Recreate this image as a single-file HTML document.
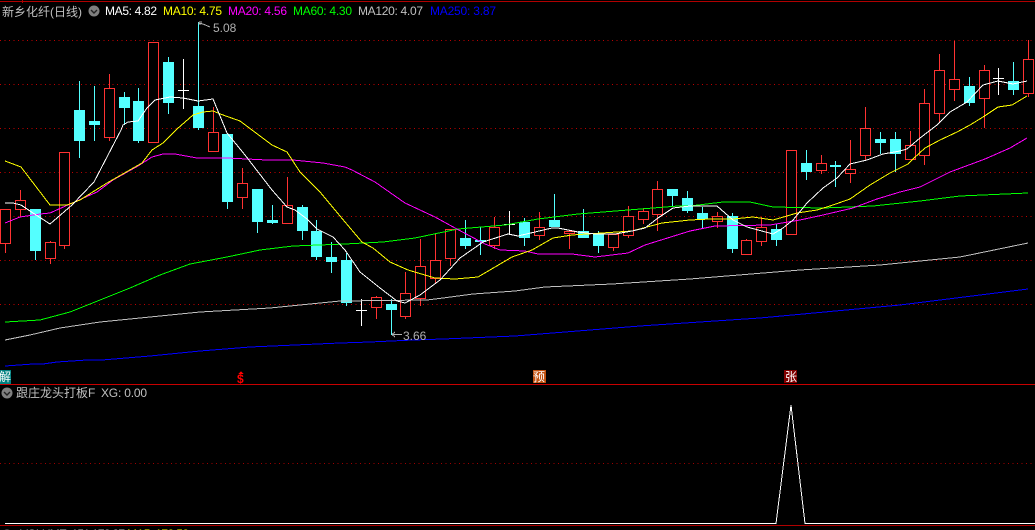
<!DOCTYPE html>
<html><head><meta charset="utf-8"><title>新乡化纤</title>
<style>
html,body{margin:0;padding:0;background:#000;width:1035px;height:530px;overflow:hidden}
svg{display:block;position:absolute;left:0;top:0}
text{font-family:"Liberation Sans","WenQuanYi Zen Hei","Noto Sans CJK SC",sans-serif;font-size:12px}
</style></head><body>
<svg width="1035" height="530" viewBox="0 0 1035 530" xmlns="http://www.w3.org/2000/svg">
<rect width="1035" height="530" fill="#000"/>
<g shape-rendering="crispEdges" fill="none">
<path d="M0 1.5H1035M22.5 0V3" stroke="#b00000"/>
<path d="M0 40.5H1035M0 84.5H1035M0 128.5H1035M0 172.5H1035M0 216.5H1035M0 260.5H1035M0 304.5H1035" stroke="#c00000" stroke-dasharray="1 3.5"/>
<path d="M0 463.5H1035" stroke="#a00000" stroke-dasharray="1 3.5"/>
<path d="M0 384.5H1035" stroke="#c80000"/>
<path d="M0 525.5H1035" stroke="#b00000"/>

<!-- red wicks -->
<path stroke="#ff3232" d="M5.5 243V253M20.5 190V217M50.5 241V264M64.5 245V249M109.5 74V141M213.5 107V151M242.5 168V209M287.5 177V223M376.5 296V319M405.5 272V319M420.5 239V306M435.5 234V284M450.5 229V266M494.5 217V249M539.5 212V240M569.5 231V249M613.5 234V251M628.5 206V238M643.5 208V224M657.5 181V231M717.5 212V228M746.5 239V254M761.5 217V246M791.5 150V235M821.5 155V174M850.5 140V183M865.5 107V160M910.5 131V160M924.5 89V165M939.5 54V123M954.5 41V101M984.5 65V128M1028.5 40V97"/>
<!-- cyan wicks -->
<path stroke="#54ffff" d="M35.5 209V260M79.5 81V158M94.5 86V141M124.5 92V125M138.5 88V143M168.5 57V114M198.5 22V130M227.5 134V209M257.5 189V233M272.5 205V224M302.5 205V240M316.5 220V260M331.5 242V273M346.5 253V306M391.5 299V335M465.5 220V249M480.5 227V255M524.5 218V246M554.5 194V227M583.5 209V238M598.5 231V253M672.5 189V206M687.5 191V213M702.5 207V229M732.5 213V253M776.5 224V246M806.5 150V180M835.5 161V187M880.5 132V154M895.5 132V172M969.5 77V106M1013.5 62V95"/>
<!-- white crosses -->
<path stroke="#fff" d="M183.5 59V109M178 90.5H189M361.5 299V326M356 310.5H367M509.5 211V234M504 224.5H515M998.5 68V95M993 78.5H1004"/>
<!-- red bodies -->
<g stroke="#ff3232" fill="#000">
<rect x="0.5" y="209.5" width="10" height="34"/>
<rect x="15.5" y="200.5" width="10" height="9"/>
<rect x="45.5" y="242.5" width="10" height="16"/>
<rect x="59.5" y="152.5" width="10" height="93"/>
<rect x="104.5" y="88.5" width="10" height="49"/>
<rect x="148.5" y="42.5" width="10" height="100"/>
<rect x="208.5" y="132.5" width="10" height="19"/>
<rect x="237.5" y="183.5" width="10" height="14"/>
<rect x="282.5" y="205.5" width="10" height="18"/>
<rect x="371.5" y="297.5" width="10" height="10"/>
<rect x="400.5" y="293.5" width="10" height="23"/>
<rect x="415.5" y="266.5" width="10" height="32"/>
<rect x="430.5" y="260.5" width="10" height="18"/>
<rect x="445.5" y="229.5" width="10" height="29"/>
<rect x="489.5" y="227.5" width="10" height="18"/>
<rect x="534.5" y="227.5" width="10" height="8"/>
<rect x="564.5" y="231.5" width="10" height="2"/>
<rect x="608.5" y="234.5" width="10" height="13"/>
<rect x="623.5" y="216.5" width="10" height="19"/>
<rect x="638.5" y="211.5" width="10" height="8"/>
<rect x="652.5" y="189.5" width="10" height="25"/>
<rect x="712.5" y="216.5" width="10" height="5"/>
<rect x="741.5" y="240.5" width="10" height="14"/>
<rect x="756.5" y="227.5" width="10" height="14"/>
<rect x="786.5" y="150.5" width="10" height="84"/>
<rect x="816.5" y="163.5" width="10" height="7"/>
<rect x="845.5" y="169.5" width="10" height="4"/>
<rect x="860.5" y="128.5" width="10" height="27"/>
<rect x="905.5" y="145.5" width="10" height="14"/>
<rect x="919.5" y="103.5" width="10" height="52"/>
<rect x="934.5" y="70.5" width="10" height="43"/>
<rect x="949.5" y="79.5" width="10" height="10"/>
<rect x="979.5" y="70.5" width="10" height="28"/>
<rect x="1023.5" y="59.5" width="10" height="34"/>
</g>
<!-- cyan bodies -->
<g fill="#54ffff">
<rect x="30" y="209" width="11" height="42"/>
<rect x="74" y="110" width="11" height="31"/>
<rect x="89" y="121" width="11" height="4"/>
<rect x="119" y="97" width="11" height="11"/>
<rect x="133" y="101" width="11" height="40"/>
<rect x="163" y="62" width="11" height="41"/>
<rect x="193" y="106" width="11" height="22"/>
<rect x="222" y="134" width="11" height="68"/>
<rect x="252" y="189" width="11" height="33"/>
<rect x="267" y="220" width="11" height="3"/>
<rect x="297" y="207" width="11" height="24"/>
<rect x="311" y="231" width="11" height="26"/>
<rect x="326" y="257" width="11" height="5"/>
<rect x="341" y="260" width="11" height="43"/>
<rect x="386" y="304" width="11" height="6"/>
<rect x="460" y="238" width="11" height="8"/>
<rect x="475" y="240" width="11" height="2"/>
<rect x="519" y="222" width="11" height="16"/>
<rect x="549" y="220" width="11" height="7"/>
<rect x="578" y="231" width="11" height="7"/>
<rect x="593" y="233" width="11" height="13"/>
<rect x="667" y="189" width="11" height="7"/>
<rect x="682" y="198" width="11" height="13"/>
<rect x="697" y="213" width="11" height="6"/>
<rect x="727" y="216" width="11" height="33"/>
<rect x="771" y="229" width="11" height="11"/>
<rect x="801" y="163" width="11" height="9"/>
<rect x="830" y="165" width="11" height="2"/>
<rect x="875" y="139" width="11" height="4"/>
<rect x="890" y="139" width="11" height="15"/>
<rect x="964" y="86" width="11" height="17"/>
<rect x="1008" y="81" width="11" height="9"/>
</g>

<!-- MA250 -->
<polyline stroke="#0000ff" points="5,366 33,364 43,364 57,362 72,361 87,360 102,360 150,356 200,351 250,347 340,343 370,342 413,340 443,339 515,336 640,326 760,318 900,305 1028,289"/>
<!-- MA120 -->
<polyline stroke="#c0c0c0" points="5,340 30,335 60,328 100,322 150,317 200,312 270,308 340,301 427,300 443,298 473,294 515,291 545,287 612,284 690,279 800,270 880,265 960,257 1028,243"/>
<!-- MA60 -->
<polyline stroke="#00ff00" points="5,322 40,320 70,312 100,300 130,288 160,275 190,264 227,257 260,250 293,246 345,244 383,242 415,238 458,229 505,225 538,219 578,214 628,210 678,206 690,206 723,202 750,202 773,207 823,208 873,206 920,201 960,196 1028,193"/>
<!-- MA20 -->
<polyline stroke="#ff00ff" points="5,223 20,217 40,214 50,213 70,204 97,192 113,180 138,166 152,157 163,154 175,154 197,158 227,158 267,160 293,160 323,163 345,167 352,170 375,182 405,203 435,217 455,228 485,244 500,250 525,251 538,254 572,254 595,257 628,253 645,245 690,231 715,226 770,225 800,220 823,215 853,208 877,199 900,192 920,187 950,172 985,159 1010,148 1027,138"/>
<!-- MA10 -->
<polyline stroke="#ffff00" points="5,161 21,167 50,205 67,205 80,200 107,183 142,163 152,150 163,143 177,129 193,115 203,112 213,111 223,115 240,121 252,130 272,145 287,152 300,172 320,192 345,222 362,242 373,248 390,262 408,270 435,278 455,279 478,277 495,267 512,257 532,250 553,238 572,235 602,233 632,231 662,223 690,220 710,219 733,219 753,217 773,220 787,216 797,213 817,210 830,206 850,199 870,185 890,173 908,164 913,159 925,148 940,140 957,132 970,125 983,117 998,107 1012,105 1027,96"/>
<!-- MA5 -->
<polyline stroke="#ffffff" points="5,203 13,203 21,205 33,213 50,224 72,205 94,182 121,130 123,125 128,122 138,121 147,108 155,100 170,97 183,98 198,101 213,99 227,133 245,155 272,190 287,207 295,210 307,219 317,229 333,237 345,250 360,272 380,288 397,301 405,303 420,295 440,280 460,258 483,242 508,234 518,236 552,228 558,228 578,232 595,234 615,234 632,231 645,228 658,218 673,208 690,206 710,206 717,206 733,220 747,227 773,234 783,228 793,220 807,203 823,188 837,178 850,164 867,160 883,154 900,151 907,149 920,138 937,125 950,112 967,102 983,85 998,81 1013,84 1027,81"/>

<!-- high / low markers -->
<polyline stroke="#b0b0b0" points="198,23 203,24 210,27"/>
<path stroke="#b0b0b0" d="M199 22H202M199 24H201"/>
<path stroke="#b0b0b0" d="M392 334.5H402M392 334.5L395 332M392 334.5L395 337"/>

<!-- indicator -->
<path stroke="#fff" d="M5 523.5H776L791 405L805 523.5H1035"/>

<!-- signal boxes -->
<rect x="0" y="370" width="11" height="14" fill="#008080"/>
<rect x="533" y="370" width="13" height="13" fill="#c0500f"/>
<rect x="784" y="370" width="13" height="13" fill="#800000"/>
<path fill="#ff0000" d="M241 371l2.500 3h-5z"/>
</g>

<text x="213" y="32" fill="#b0b0b0">5.08</text>
<text x="403" y="340" fill="#b0b0b0">3.66</text>
<text x="-1" y="381" fill="#fff" font-weight="400">解</text>
<text x="237" y="383" fill="#ff0000" style="font-weight:700;font-size:12px">$</text>
<text x="533" y="381" fill="#fff">预</text>
<text x="785" y="381" fill="#fff">张</text>

<text x="2" y="16" fill="#c0c0c0">新乡化纤(日线)</text>
<circle cx="94" cy="11" r="5.5" fill="#808080"/>
<path d="M91 10l3 3 3-3" stroke="#222" stroke-width="1.4" fill="none"/>
<text x="105" y="15" fill="#ffffff" textLength="52">MA5: 4.82</text>
<text x="163" y="15" fill="#ffff00" textLength="59">MA10: 4.75</text>
<text x="228" y="15" fill="#ff00ff" textLength="59">MA20: 4.56</text>
<text x="293" y="15" fill="#00ff00" textLength="59">MA60: 4.30</text>
<text x="358" y="15" fill="#c0c0c0" textLength="65">MA120: 4.07</text>
<text x="430" y="15" fill="#0000ff" textLength="66">MA250: 3.87</text>

<circle cx="7" cy="393" r="5.5" fill="#808080"/>
<path d="M4 392l3 3 3-3" stroke="#222" stroke-width="1.4" fill="none"/>
<text x="16" y="397" fill="#c0c0c0">跟庄龙头打板F</text>
<text x="101" y="397" fill="#c0c0c0" textLength="46">XG: 0.00</text>

<circle cx="7" cy="535" r="5.5" fill="#808080"/>
<text x="20" y="538" fill="#c0c0c0" textLength="105">VOLUME: 151 178.27</text>
<text x="127" y="538" fill="#ffff00" textLength="62">MA5: 178.58</text>
</svg>
</body></html>
